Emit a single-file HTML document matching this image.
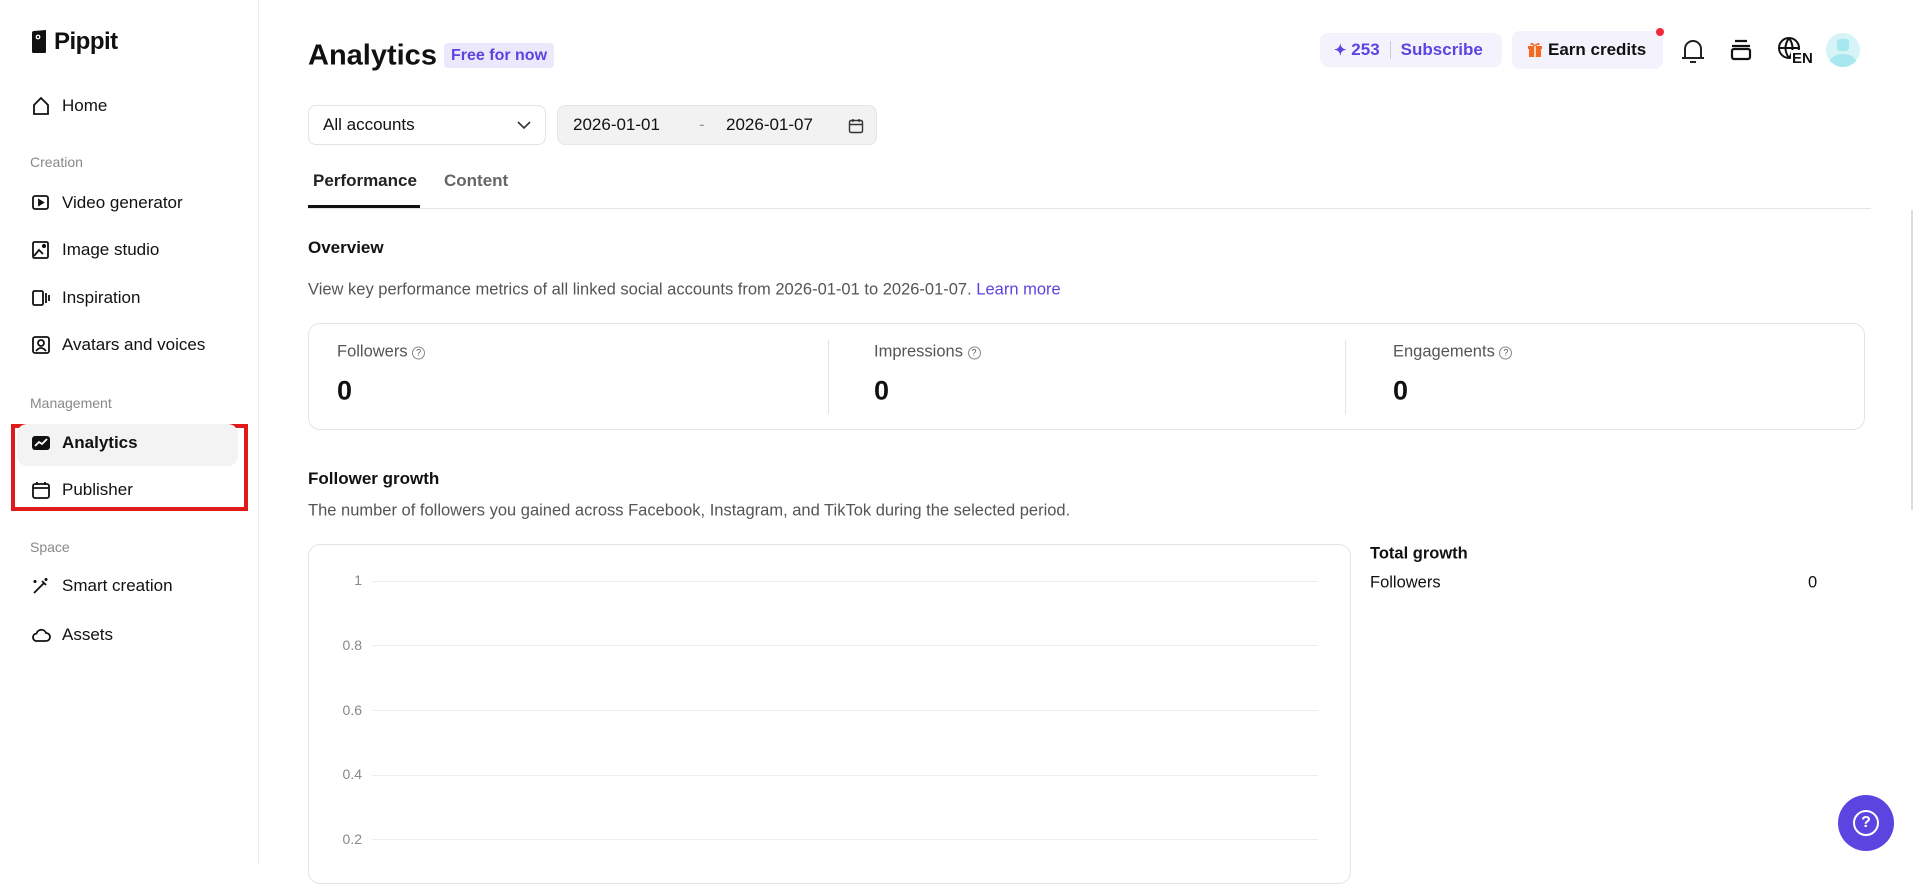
<!DOCTYPE html>
<html><head><meta charset="utf-8"><style>
*{box-sizing:border-box;margin:0;padding:0}
body{width:1914px;height:864px;overflow:hidden;background:#fff;font-family:"Liberation Sans",sans-serif;color:#111;position:relative}
.a{position:absolute;white-space:nowrap}
.side{position:absolute;left:0;top:0;width:259px;height:864px;border-right:1px solid #ececec}
.nav{position:absolute;left:31px;font-size:17px;color:#111;display:flex;align-items:center;gap:11px;transform:translateY(-50%)}
.nav svg{width:20px;height:20px}
.sec{position:absolute;left:30px;font-size:14px;color:#888;transform:translateY(-50%)}
.c{transform:translateY(-50%)}
</style></head><body>
<div class="side">
 <div class="a" style="left:30px;top:28px;display:flex;align-items:center;gap:6px">
  <svg width="18" height="24" viewBox="0 0 18 24"><path d="M2 3 Q2 1 4 1 L16 0 L16 22 Q16 23 14 23 L3 23 Q2 23 2 21Z" fill="#111"/><circle cx="8" cy="7" r="2.4" fill="#fff"/><circle cx="8" cy="7" r="1.1" fill="#111"/></svg>
  <span style="font-size:24px;font-weight:bold;letter-spacing:-0.5px">Pippit</span>
 </div>
 <div class="a" style="left:11px;top:424px;width:237px;height:87px;border:4px solid #e0191b"></div>
 <div class="a" style="left:17px;top:424px;width:221px;height:42px;background:#f3f3f3;border-radius:10px"></div>
 <div class="nav" style="top:106px"><svg viewBox="0 0 20 20" fill="none" stroke="#111" stroke-width="1.8"><path d="M3 9 L10 2 L17 9 V18 H3Z"/></svg>Home</div>
 <div class="sec" style="top:162px">Creation</div>
 <div class="nav" style="top:203px"><svg viewBox="0 0 20 20" fill="none" stroke="#111" stroke-width="1.8"><rect x="2" y="3" width="15" height="13" rx="2"/><path d="M8 7 L12 9.5 L8 12Z" fill="#111"/></svg>Video generator</div>
 <div class="nav" style="top:250px"><svg viewBox="0 0 20 20" fill="none" stroke="#111" stroke-width="1.8"><rect x="2" y="2" width="15" height="16" rx="1.5"/><path d="M3 16 L8 10 L12 14"/><circle cx="13" cy="6" r="1.2" fill="#111"/></svg>Image studio</div>
 <div class="nav" style="top:298px"><svg viewBox="0 0 20 20" fill="none" stroke="#111" stroke-width="1.8"><rect x="2" y="3" width="10" height="14" rx="1.5"/><path d="M15 5 V15 M18 7 V13"/></svg>Inspiration</div>
 <div class="nav" style="top:345px"><svg viewBox="0 0 20 20" fill="none" stroke="#111" stroke-width="1.8"><rect x="2" y="2" width="16" height="16" rx="2"/><circle cx="10" cy="8" r="3"/><path d="M5 16 Q10 10 15 16"/></svg>Avatars and voices</div>
 <div class="sec" style="top:403px">Management</div>
 <div class="nav" style="top:443px;font-weight:bold"><svg viewBox="0 0 20 20"><rect x="1" y="3" width="18" height="14" rx="3" fill="#111"/><path d="M4 13 L8 9 L11 11 L16 6" stroke="#fff" stroke-width="1.8" fill="none"/></svg>Analytics</div>
 <div class="nav" style="top:490px"><svg viewBox="0 0 20 20" fill="none" stroke="#111" stroke-width="1.8"><rect x="2" y="4" width="16" height="14" rx="2"/><path d="M2 8 H18 M6 2 V5 M14 2 V5"/></svg>Publisher</div>
 <div class="sec" style="top:547px">Space</div>
 <div class="nav" style="top:586px"><svg viewBox="0 0 20 20" fill="none" stroke="#111" stroke-width="1.8"><path d="M3 17 L13 7 M11 5 L15 9"/><path d="M15 2 V5 M13.5 3.5 H16.5 M4 4 V7 M2.5 5.5 H5.5"/></svg>Smart creation</div>
 <div class="nav" style="top:635px"><svg viewBox="0 0 20 20" fill="none" stroke="#111" stroke-width="1.8"><path d="M5 16 H15 A4 4 0 0 0 15 8 A5 5 0 0 0 5.5 8.5 A3.8 3.8 0 0 0 5 16Z"/></svg>Assets</div>
</div>

<div class="a c" style="left:308px;top:56px;font-size:29px;font-weight:bold">Analytics</div>
<div class="a" style="left:444px;top:43px;height:25px;padding:0 7px;background:#ece8fc;color:#5b45e0;font-size:16px;font-weight:bold;line-height:25px;border-radius:4px">Free for now</div>

<div class="a" style="left:1320px;top:33px;width:182px;height:34px;background:#f4f3fd;border-radius:8px;display:flex;align-items:center;padding-left:14px;color:#5b45e0;font-weight:bold;font-size:17px">
 <span style="font-size:15px">✦</span>&nbsp;253<span style="display:inline-block;width:1px;height:18px;background:#ccc;margin:0 10px"></span>Subscribe</div>
<div class="a" style="left:1512px;top:31px;width:151px;height:38px;background:#f4f3fd;border-radius:8px;display:flex;align-items:center;padding-left:16px;font-weight:bold;font-size:17px">
 <svg width="14" height="16" viewBox="0 0 14 16" style="margin-right:6px"><rect x="1" y="5" width="12" height="10" fill="#f26a21"/><rect x="0" y="4" width="14" height="3" fill="#f26a21"/><path d="M7 4 Q3 0 3 3 M7 4 Q11 0 11 3" stroke="#f26a21" fill="none" stroke-width="1.5"/><rect x="6.3" y="4" width="1.4" height="11" fill="#fff"/></svg>Earn credits</div>
<div class="a" style="left:1656px;top:28px;width:8px;height:8px;border-radius:50%;background:#f0283c"></div>
<svg class="a" style="left:1680px;top:37px" width="26" height="28" viewBox="0 0 26 28" fill="none" stroke="#222" stroke-width="2"><path d="M5 21 V12 A8 8 0 0 1 21 12 V21 Z M2 21 H24"/><path d="M10 25 H16"/></svg>
<svg class="a" style="left:1729px;top:38px" width="24" height="24" viewBox="0 0 24 24" fill="none" stroke="#111" stroke-width="2.2"><path d="M6 3 H18 M3 8 H21"/><rect x="3" y="11" width="18" height="10" rx="2"/></svg>
<svg class="a" style="left:1777px;top:36px" width="32" height="32" viewBox="0 0 32 32" fill="none" stroke="#111" stroke-width="2"><circle cx="12" cy="12" r="10"/><path d="M2 12 H22 M12 2 Q5 12 12 22 M12 2 Q19 12 12 22"/></svg>
<div class="a" style="left:1791px;top:50px;font-size:15px;font-weight:bold;background:#fff;padding:0 1px">EN</div>
<div class="a" style="left:1826px;top:33px;width:34px;height:34px;border-radius:50%;background:#d6f4f7;overflow:hidden"><div style="position:absolute;left:11px;top:6px;width:12px;height:12px;background:#a7e7ef;border-radius:3px"></div><div style="position:absolute;left:3px;top:21px;width:28px;height:20px;background:#a7e7ef;border-radius:50%"></div></div>

<div class="a" style="left:308px;top:105px;width:238px;height:40px;border:1px solid #e2e2e2;border-radius:8px;display:flex;align-items:center;padding-left:14px;font-size:17px">All accounts
 <svg style="position:absolute;right:14px;top:14px" width="14" height="10" viewBox="0 0 14 10" fill="none" stroke="#333" stroke-width="1.6"><path d="M1 2 L7 8 L13 2"/></svg></div>
<div class="a" style="left:557px;top:105px;width:320px;height:40px;background:#f2f2f2;border:1px solid #e6e6e6;border-radius:8px;font-size:17px">
 <span class="a c" style="left:15px;top:19px">2026-01-01</span><span class="a c" style="left:141px;top:19px;color:#999">-</span><span class="a c" style="left:168px;top:19px">2026-01-07</span>
 <svg style="position:absolute;left:290px;top:12px" width="16" height="16" viewBox="0 0 16 16" fill="none" stroke="#333" stroke-width="1.4"><rect x="1.5" y="2.5" width="13" height="12" rx="1.5"/><path d="M1.5 6.5 H14.5 M5 1 V4 M11 1 V4"/></svg></div>

<div class="a c" style="left:313px;top:181px;font-size:17px;font-weight:bold;color:#222">Performance</div>
<div class="a c" style="left:444px;top:181px;font-size:17px;font-weight:bold;color:#666">Content</div>
<div class="a" style="left:308px;top:208px;width:1563px;height:1px;background:#e5e5e5"></div>
<div class="a" style="left:308px;top:205px;width:112px;height:3px;background:#111"></div>

<div class="a c" style="left:308px;top:248px;font-size:17px;font-weight:bold">Overview</div>
<div class="a c" style="left:308px;top:290px;font-size:16.5px;color:#555">View key performance metrics of all linked social accounts from 2026-01-01 to 2026-01-07. <span style="color:#5b45e0">Learn more</span></div>

<div class="a" style="left:308px;top:323px;width:1557px;height:107px;border:1px solid #e4e4e4;border-radius:12px"></div>
<div class="a" style="left:828px;top:340px;width:1px;height:74px;background:#e4e4e4"></div>
<div class="a" style="left:1345px;top:340px;width:1px;height:74px;background:#e4e4e4"></div>
<div class="a c" style="left:337px;top:352px;font-size:16.5px;color:#555">Followers <span style="display:inline-block;width:13px;height:13px;border:1.3px solid #888;border-radius:50%;font-size:9px;text-align:center;line-height:11px;vertical-align:1px">?</span></div>
<div class="a c" style="left:874px;top:352px;font-size:16.5px;color:#555">Impressions <span style="display:inline-block;width:13px;height:13px;border:1.3px solid #888;border-radius:50%;font-size:9px;text-align:center;line-height:11px;vertical-align:1px">?</span></div>
<div class="a c" style="left:1393px;top:352px;font-size:16.5px;color:#555">Engagements <span style="display:inline-block;width:13px;height:13px;border:1.3px solid #888;border-radius:50%;font-size:9px;text-align:center;line-height:11px;vertical-align:1px">?</span></div>
<div class="a c" style="left:337px;top:391px;font-size:27px;font-weight:bold">0</div>
<div class="a c" style="left:874px;top:391px;font-size:27px;font-weight:bold">0</div>
<div class="a c" style="left:1393px;top:391px;font-size:27px;font-weight:bold">0</div>

<div class="a c" style="left:308px;top:479px;font-size:17px;font-weight:bold">Follower growth</div>
<div class="a c" style="left:308px;top:511px;font-size:16.5px;color:#555">The number of followers you gained across Facebook, Instagram, and TikTok during the selected period.</div>

<div class="a" style="left:308px;top:544px;width:1043px;height:340px;border:1px solid #e4e4e4;border-radius:12px"></div>
<div class="a c" style="left:340px;top:580px;width:22px;text-align:right;font-size:14px;color:#888">1</div>
<div class="a c" style="left:330px;top:645px;width:32px;text-align:right;font-size:14px;color:#888">0.8</div>
<div class="a c" style="left:330px;top:710px;width:32px;text-align:right;font-size:14px;color:#888">0.6</div>
<div class="a c" style="left:330px;top:774px;width:32px;text-align:right;font-size:14px;color:#888">0.4</div>
<div class="a c" style="left:330px;top:839px;width:32px;text-align:right;font-size:14px;color:#888">0.2</div>
<div class="a" style="left:372px;top:581px;width:946px;height:1px;background:#ededed"></div>
<div class="a" style="left:372px;top:645px;width:946px;height:1px;background:#ededed"></div>
<div class="a" style="left:372px;top:710px;width:946px;height:1px;background:#ededed"></div>
<div class="a" style="left:372px;top:775px;width:946px;height:1px;background:#ededed"></div>
<div class="a" style="left:372px;top:839px;width:946px;height:1px;background:#ededed"></div>

<div class="a c" style="left:1370px;top:554px;font-size:16.5px;font-weight:bold">Total growth</div>
<div class="a c" style="left:1370px;top:583px;font-size:16.5px">Followers</div>
<div class="a c" style="left:1808px;top:583px;font-size:16.5px">0</div>

<div class="a" style="left:1911px;top:210px;width:2px;height:300px;background:#ddd"></div>
<div class="a" style="left:1838px;top:795px;width:56px;height:56px;border-radius:50%;background:#5b45e0"></div>
<div class="a" style="left:1853px;top:810px;width:26px;height:26px;border-radius:50%;border:2.5px solid #fff;color:#fff;font-weight:bold;font-size:16px;text-align:center;line-height:21px">?</div>
</body></html>
